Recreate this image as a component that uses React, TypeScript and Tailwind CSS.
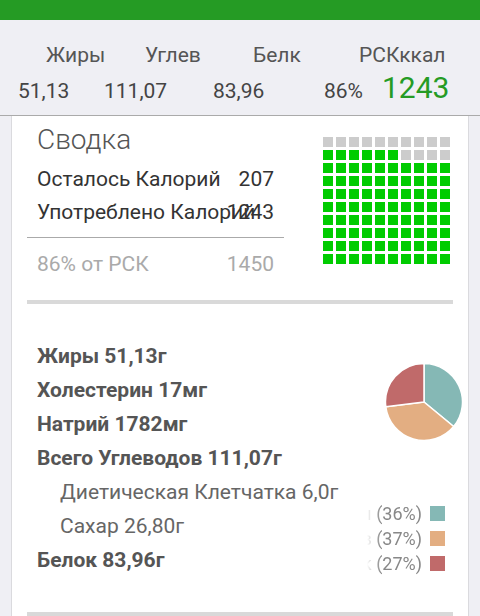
import React from 'react';

const header = [
  { label: 'Жиры', w: 'w-[99px]' },
  { label: 'Углев', w: 'w-[108px]' },
  { label: 'Белк', w: 'w-[106px]' },
  { label: 'РСКккал', w: '' },
];

const values = [
  { value: '51,13', w: 'w-[86px]' },
  { value: '111,07', w: 'w-[109px]' },
  { value: '83,96', w: 'w-[111px]' },
  { value: '86%', w: 'w-[58px]' },
];

const nutrients = [
  { text: 'Жиры 51,13г', sub: false },
  { text: 'Холестерин 17мг', sub: false },
  { text: 'Натрий 1782мг', sub: false },
  { text: 'Всего Углеводов 111,07г', sub: false },
  { text: 'Диетическая Клетчатка 6,0г', sub: true },
  { text: 'Сахар 26,80г', sub: true },
  { text: 'Белок 83,96г', sub: false },
];

const slices = [
  { name: 'Жиры', pct: 36, color: '#85b8b5' },
  { name: 'Углев', pct: 37, color: '#e3ae82' },
  { name: 'Белк', pct: 27, color: '#c06a6a' },
];

// 10x10 waffle, 86 of 100 filled from the bottom
const cells = Array.from({ length: 100 }, (_, i) => {
  const row = Math.floor(i / 10);
  const col = i % 10;
  return !(row === 0 || (row === 1 && col >= 6));
});

function Pie() {
  const r = 38.5;
  const c = 39;
  let start = -90;
  const paths = slices.map((s) => {
    const sweep = (s.pct / 100) * 360;
    const end = start + sweep;
    const a0 = (start * Math.PI) / 180;
    const a1 = (end * Math.PI) / 180;
    const x0 = c + r * Math.cos(a0);
    const y0 = c + r * Math.sin(a0);
    const x1 = c + r * Math.cos(a1);
    const y1 = c + r * Math.sin(a1);
    const large = sweep > 180 ? 1 : 0;
    start = end;
    return (
      <path
        key={s.name}
        d={`M${c} ${c} L${x0} ${y0} A${r} ${r} 0 ${large} 1 ${x1} ${y1} Z`}
        fill={s.color}
        stroke="white"
        strokeWidth="1.5"
        strokeLinejoin="round"
      />
    );
  });
  return (
    <svg width="78" height="78" viewBox="0 0 78 78" aria-hidden="true">
      {paths}
    </svg>
  );
}

export default function App() {
  return (
    <div className="w-full h-[616px] overflow-hidden bg-[#efeff4] font-['Roboto',sans-serif]">
      {/* Status bar */}
      <div className="h-[20px] bg-[#259b24]" />

      {/* Totals header */}
      <div className="h-[95px] pt-[25px]">
        <div className="flex pl-[46px] text-[21px] leading-none text-[#555555]">
          {header.map((h) => (
            <div key={h.label} className={h.w}>
              {h.label}
            </div>
          ))}
        </div>
        <div className="flex items-baseline pl-[18px] mt-[7px] leading-none text-[#444444]">
          {values.map((v) => (
            <div key={v.value} className={`${v.w} text-[21px]`}>
              {v.value}
            </div>
          ))}
          <div className="text-[30px] text-[#259b24]">1243</div>
        </div>
      </div>

      <div className="border-t border-[#aaaaaa]">
        <div className="mx-[11px] h-[520px] border-x border-[#dadade] bg-white">
          {/* Summary */}
          <div className="flex">
            <div className="ml-[15px] w-[257px] pt-[10px]">
              <div className="pl-[10px] text-[28px] leading-none font-light text-[#555555]">Сводка</div>
              <div className="mt-[9px] px-[10px] text-[21px] leading-[33px] text-[#333333]">
                <div className="flex justify-between whitespace-nowrap">
                  <span>Осталось Калорий</span>
                  <span>207</span>
                </div>
                <div className="grid whitespace-nowrap">
                  <span className="col-start-1 row-start-1">Употреблено Калорий</span>
                  <span className="col-start-1 row-start-1 justify-self-end">1243</span>
                </div>
              </div>
              <div className="mt-[8px] border-t border-[#aaaaaa]" />
              <div className="mt-[10px] px-[10px] flex justify-between text-[21px] leading-[33px] text-[#aaaaaa]">
                <span>86% от РСК</span>
                <span>1450</span>
              </div>
            </div>
            <div className="ml-[39px] mt-[21px] grid grid-cols-[repeat(10,10px)] gap-[3px] self-start">
              {cells.map((on, i) => (
                <div key={i} className={`w-[10px] h-[10px] ${on ? 'bg-[#00cc00]' : 'bg-[#cccccc]'}`} />
              ))}
            </div>
          </div>
          <div className="mx-[15px] mt-[19px] h-[4px] bg-[#d9d9d9]" />

          {/* Nutrients */}
          <div className="flex">
            <div className="flex-1 pl-[25px] pt-[35px] text-[21px] leading-[34px] whitespace-nowrap">
              {nutrients.map((n) =>
                n.sub ? (
                  <div key={n.text} className="pl-[23px] text-[#666666]">
                    {n.text}
                  </div>
                ) : (
                  <div key={n.text} className="font-bold text-[#555555]">
                    {n.text}
                  </div>
                )
              )}
            </div>
            <div className="w-[96px] mr-[5px] pt-[59px] flex flex-col">
              <div className="self-end">
                <Pie />
              </div>
              <div className="mt-[60px] flex flex-col [mask-image:linear-gradient(to_right,transparent,black_14px)]">
                {slices.map((s) => (
                  <div key={s.name} className="h-[25px] flex items-center justify-end overflow-hidden pr-[18px]">
                    <span className="shrink-0 whitespace-nowrap text-[18px] leading-none text-[#888888]">
                      {s.name} ({s.pct}%)
                    </span>
                    <span className="shrink-0 ml-[8px] w-[15px] h-[15px]" style={{ backgroundColor: s.color }} />
                  </div>
                ))}
              </div>
            </div>
          </div>
          <div className="mx-[15px] mt-[35px] h-[4px] bg-[#d9d9d9]" />
        </div>
      </div>
    </div>
  );
}
